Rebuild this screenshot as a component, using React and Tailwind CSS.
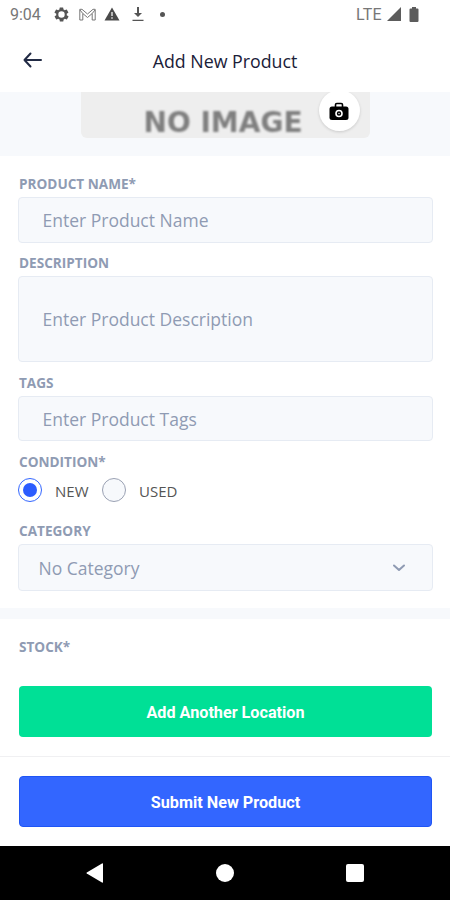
import { useState } from "react";

const Label = ({ children, className = "" }) => (
    <label
        className={`block h-[18px] pl-px text-[13.6px] leading-[17px] font-bold text-[#8f9bb3] ${className}`}
    >
        {children}
    </label>
);

const Field = ({ placeholder, className }) => (
    <input
        type="text"
        placeholder={placeholder}
        className={`block w-full mt-1 px-[23.5px] rounded-[4px] border border-[#e6ebf3] bg-[#f7f9fc] text-[17.5px] text-[#222b45] placeholder:text-[#8f9bb3] outline-none ${className}`}
    />
);

const Radio = ({ label, checked, onSelect, className = "" }) => (
    <div className={`flex items-center cursor-pointer ${className}`} onClick={onSelect}>
        <span
            className={`flex w-[24px] h-[24px] items-center justify-center rounded-full border ${
                checked ? "border-[#3366ff] bg-white" : "border-[#9aa1b3] bg-[#f7f9fc]"
            }`}
        >
            {checked && <span className="w-[14px] h-[14px] rounded-full bg-[#2b5cff]"></span>}
        </span>
        <span className="ml-[13px] mt-[2px] text-[15px] text-[#555]">{label}</span>
    </div>
);

function StatusBar() {
    return (
        <div className="h-7 flex items-center pl-[10px] pr-[31px] font-[Roboto,sans-serif] text-[#777]">
            <span className="w-[43px] text-[16px] mt-px">9:04</span>
            <svg width="17" height="17" viewBox="0 0 24 24" fill="#555">
                <path
                    fillRule="evenodd"
                    d="M19.4 13a7.6 7.6 0 0 0 0-2l2.1-1.6a.5.5 0 0 0 .1-.7l-2-3.4a.5.5 0 0 0-.6-.2l-2.5 1a7 7 0 0 0-1.7-1l-.4-2.7a.5.5 0 0 0-.5-.4h-4a.5.5 0 0 0-.5.4l-.4 2.7a7 7 0 0 0-1.7 1l-2.5-1a.5.5 0 0 0-.6.2l-2 3.4a.5.5 0 0 0 .1.7L4.600 11a7.600 7.600 0 0 0 0 2l-2.100 1.600a.5.5 0 0 0-.1.7l2 3.400c.1.2.4.3.6.2l2.500-1c.5.4 1.100.7 1.700 1l.4 2.700c0 .2.2.4.5.4h4c.2 0 .5-.2.5-.4l.4-2.700c.6-.3 1.200-.6 1.700-1l2.500 1c.2.1.5 0 .6-.2l2-3.400a.5.5 0 0 0-.1-.7zM12 7.500a4.500 4.500 0 1 1 0 9 4.500 4.500 0 0 1 0-9z"
                />
            </svg>
            <svg className="ml-[9px]" width="17" height="13" viewBox="0 0 17 13" fill="none" stroke="#777" strokeWidth="1">
                <path d="M.8 12V1.300H3L8.500 6 14 1.300h2.200V12h-3V5.500L8.500 9.500 3.800 5.500V12zM3.800 5.500L1 2M13.200 5.500L16 2" />
            </svg>
            <svg className="ml-[8px]" width="16" height="14" viewBox="0 0 16 14">
                <path d="M8 .5L15.500 13.500H.5z" fill="#4a4a4a" />
                <path d="M8 5v4M8 10.300v1.500" stroke="#ddd" strokeWidth="1.500" />
            </svg>
            <svg className="ml-[12px]" width="12" height="15" viewBox="0 0 12 15" fill="#555">
                <path d="M5 0h2v6h3l-4 4-4-4h3zM.5 12.800h11V14H.5z" />
            </svg>
            <span className="ml-[16px] w-[5px] h-[5px] rounded-full bg-[#555]"></span>
            <span className="ml-auto mt-px text-[16px] tracking-[0.3px]">LTE</span>
            <svg className="ml-[5px]" width="14" height="14" viewBox="0 0 14 14" fill="#5c5c5c">
                <path d="M14 0v14H0z" />
            </svg>
            <svg className="ml-[8px]" width="10" height="15" viewBox="0 0 10 15" fill="#5c5c5c">
                <path d="M3 0h4v1.500h1.500q1 0 1 1V14q0 1-1 1h-7q-1 0-1-1V2.500q0-1 1-1H3z" />
            </svg>
        </div>
    );
}

function Header() {
    return (
        <div className="h-16 grid grid-cols-[1fr_auto_1fr] items-center px-[23px]">
            <svg width="20" height="16" viewBox="0 0 20 16" fill="none" stroke="#222b45" strokeWidth="2" strokeLinecap="round" strokeLinejoin="round">
                <path d="M18 8H1.500M7.500 1.500L1.500 8l6 6.500" />
            </svg>
            <h1 className="mt-[2px] text-[17.8px] font-medium text-[#1a2038]">Add New Product</h1>
        </div>
    );
}

// bottom edge of the product picture, the rest is scrolled away
function ProductImage() {
    return (
        <div className="h-16 flex justify-center bg-[#f7f9fc] overflow-hidden">
            <div className="relative w-[289px] h-[46px] flex justify-center rounded-b-[6px] bg-[#eeeeee]">
                <span className="mt-[14px] ml-[-4px] font-['DejaVu_Sans',sans-serif] text-[28px] leading-[34px] font-bold text-[#7f7f7f] blur-[0.8px]">
                    NO IMAGE
                </span>
                <div className="absolute right-[10px] top-[-2px] w-[41px] h-[41px] flex items-center justify-center rounded-full bg-white shadow-[0_1px_3px_rgba(0,0,0,0.15)]">
                    <svg width="20" height="18" viewBox="0 0 20 18">
                        <path d="M6.500 5V2.800q0-1.300 1.300-1.300h4.400q1.300 0 1.300 1.300V5" fill="none" stroke="#000" strokeWidth="1.600" />
                        <rect x=".5" y="4.500" width="19" height="13.500" rx="2.500" fill="#000" />
                        <circle cx="10" cy="11.500" r="3" fill="none" stroke="#fff" strokeWidth="1.600" />
                        <circle cx="10" cy="11.500" r=".7" fill="#fff" />
                    </svg>
                </div>
            </div>
        </div>
    );
}

function App() {
    const [condition, setCondition] = useState("NEW");

    return (
        <div className="w-[450px] h-[900px] flex flex-col overflow-hidden bg-white font-['Open_Sans',sans-serif]">
            <StatusBar />
            <Header />
            <ProductImage />

            <div className="h-[452px] pl-[18px] pr-[17px] pt-[19px]">
                <Label>PRODUCT NAME*</Label>
                <Field placeholder="Enter Product Name" className="h-[46px]" />
                <Label className="mt-[11px]">DESCRIPTION</Label>
                <Field placeholder="Enter Product Description" className="h-[86px]" />
                <Label className="mt-3">TAGS</Label>
                <Field placeholder="Enter Product Tags" className="h-[45px]" />
                <Label className="mt-3">CONDITION*</Label>
                <div className="flex h-6 mt-[7px] items-center">
                    <Radio
                        label="NEW"
                        checked={condition === "NEW"}
                        onSelect={() => setCondition("NEW")}
                        className="w-[84px]"
                    />
                    <Radio
                        label="USED"
                        checked={condition === "USED"}
                        onSelect={() => setCondition("USED")}
                    />
                </div>
                <Label className="mt-5">CATEGORY</Label>
                <div className="flex items-center justify-between mt-1 h-[47px] pl-[19.5px] pr-[27px] pt-px rounded-[4px] border border-[#e6ebf3] bg-[#f7f9fc] text-[17.5px] text-[#8f9bb3]">
                    No Category
                    <svg width="12" height="8" viewBox="0 0 12 8" fill="none" stroke="#8f9bb3" strokeWidth="2" strokeLinecap="round" strokeLinejoin="round">
                        <path d="M1 1.500l5 4.500 5-4.500" />
                    </svg>
                </div>
            </div>

            <div className="h-[11px] bg-[#f7f9fc]"></div>

            <div className="h-[137px] px-[18px] pt-[19px]">
                <Label>STOCK*</Label>
                <button className="block mt-[30px] ml-px w-[413px] h-[51px] pt-[3px] rounded-[4px] bg-[#00e096] font-[Roboto,sans-serif] text-[16.2px] font-bold text-white">
                    Add Another Location
                </button>
            </div>

            <div className="h-[90px] px-[19px] pt-[19px] border-t border-[#f0f0f2]">
                <button className="block w-[413px] h-[51px] pt-[3px] rounded-[4px] border border-[#1f55f5] bg-[#3366ff] font-[Roboto,sans-serif] text-[16.2px] font-bold text-white">
                    Submit New Product
                </button>
            </div>

            <div className="h-[54px] flex items-center justify-between pl-[86px] pr-[86px] bg-black">
                <svg width="17" height="20" viewBox="0 0 17 20" fill="#fff">
                    <path d="M17 1v18q0 1-1 .5L.8 10.600q-.8-.6 0-1.200L16 .5q1-.5 1 .5z" />
                </svg>
                <span className="w-[18px] h-[18px] rounded-full bg-white"></span>
                <span className="w-[18px] h-[18px] rounded-[2px] bg-white"></span>
            </div>
        </div>
    );
}

export default App;
